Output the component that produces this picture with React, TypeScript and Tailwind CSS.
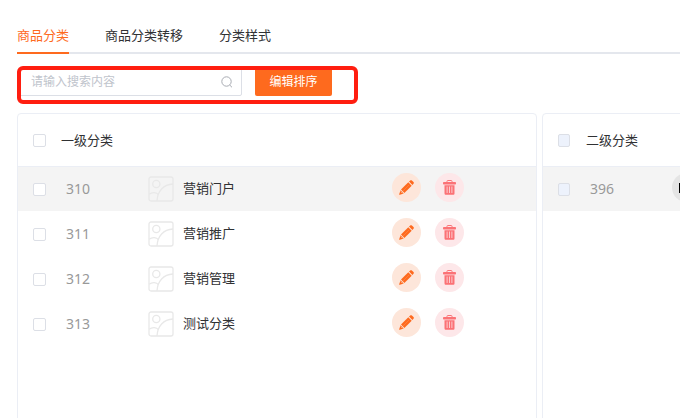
import { useState } from 'react'

type Category = {
  id: number
  name: string
}

const TABS = ['商品分类', '商品分类转移', '分类样式']

const PRIMARY: Category[] = [
  { id: 310, name: '营销门户' },
  { id: 311, name: '营销推广' },
  { id: 312, name: '营销管理' },
  { id: 313, name: '测试分类' },
]

const SECONDARY = [{ id: 396 }]

function ImagePlaceholder() {
  return (
    <svg className="size-[26px] shrink-0" viewBox="0 0 26 26" fill="none" stroke="#e8e8e8" strokeWidth="1.3" aria-hidden="true">
      <rect x="1" y="1" width="24" height="24" rx="2" />
      <circle cx="8.3" cy="8" r="3.6" />
      <path d="M25 8C15.5 8.500 9.500 15 9 25" />
      <path d="M1 18.200C4.500 15.700 8.500 16.200 10.500 18.700" />
    </svg>
  )
}

function PencilIcon() {
  return (
    <svg className="size-[15px]" viewBox="0 0 15 15" fill="#fe6a1e" aria-hidden="true">
      <path d="M2 9.600 9.300 2.300 12.700 5.700 5.400 13Z" />
      <path d="M1.500 10.300 4.700 13.500 .8 14.800C.3 14.900.1 14.700.2 14.200Z" />
      <path d="M10 1.600 11.200.5C11.700 0 12.400 0 12.900.5L14.500 2.100C15 2.600 15 3.300 14.500 3.800L13.400 5Z" />
      <path d="M4 11 10 5" stroke="#ff8b50" strokeWidth=".6" />
      <path d="M1.800 11.600 3.400 13.200" stroke="#fde6da" strokeWidth=".6" />
    </svg>
  )
}

function TrashIcon() {
  return (
    <svg className="h-[15px] w-[13px]" viewBox="0 0 13 15" fill="#fb7276" aria-hidden="true">
      <path d="M4 2V1.300C4 .8 4.300.5 4.800.5H8.200C8.700.5 9 .8 9 1.300V2" fill="none" stroke="#fb7276" />
      <rect y="2" width="13" height="2.500" rx="0.800" />
      <path d="M1.500 5.300H11.500V13.300C11.500 14.300 11 14.800 10 14.800H3C2 14.800 1.500 14.300 1.500 13.300Z" />
      <path d="M4.100 6.500V13M6.500 6.500V13M8.900 6.500V13" stroke="#fdd5d8" strokeWidth=".9" />
    </svg>
  )
}

function Tick({ label, muted }: { label: string; muted?: boolean }) {
  return (
    <input
      type="checkbox"
      aria-label={label}
      disabled={muted}
      className={`block h-[13px] appearance-none rounded-xs border border-[#dcdfe6] checked:border-[#fe6a1e] checked:bg-[#fe6a1e] ${
        muted ? 'w-3 bg-[#edf2fc]' : 'w-[13px] bg-white'
      }`}
    />
  )
}

export default function App() {
  const [tab, setTab] = useState(TABS[0])
  const [selected, setSelected] = useState(310)
  const [keyword, setKeyword] = useState('')

  return (
    <main className="h-screen overflow-hidden bg-white pl-[17px] pt-5 font-['Noto_Sans','Noto_Sans_CJK_SC',sans-serif] text-[13px] text-[#303133]">
      <nav className="flex gap-9 border-b-2 border-[#e4e7ed]">
        {TABS.map(t => (
          <button
            key={t}
            onClick={() => setTab(t)}
            className={`-mb-0.5 h-[34px] border-b-2 ${
              t === tab ? 'border-[#fe6a1e] text-[#fe6a1e]' : 'border-transparent'
            }`}
          >
            {t}
          </button>
        ))}
      </nav>

      {/* Search bar, outlined in red */}
      <div className="relative mt-3 flex h-[38px] w-[341px] items-center gap-[13px] pb-1.5">
        <label className="ml-px flex h-7 w-56 items-center rounded-xs border border-[#dcdfe6] pl-3 pr-2">
          <input
            value={keyword}
            onChange={e => setKeyword(e.target.value)}
            placeholder="请输入搜索内容"
            aria-label="搜索内容"
            className="min-w-0 flex-1 text-xs outline-none placeholder:text-[#c0c4cc]"
          />
          <svg className="size-3" viewBox="0 0 12 12" fill="none" stroke="#a8abb2" aria-hidden="true">
            <circle cx="5.500" cy="5.500" r="4.700" />
            <path d="M8.700 9 11 11.300" />
          </svg>
        </label>
        <button className="h-7 w-[77px] rounded-xs bg-[#fe6a1e] text-xs text-white">编辑排序</button>
        <div className="pointer-events-none absolute inset-0 rounded-md border-4 border-[#ff1e10]" />
      </div>

      <div className="mt-[9px] flex h-full gap-[5px]">
        <section className="w-[520px] shrink-0 rounded-t border border-[#ebeef5]">
          <table className="w-full table-fixed">
            <colgroup>
              <col className="w-[43px]" />
              <col className="w-[87px]" />
              <col className="w-[244px]" />
              <col />
            </colgroup>
            <thead>
              <tr className="h-[52px] border-b border-[#ebeef5]">
                <th className="pl-[15px] pt-0.5"><Tick label="全选一级分类" /></th>
                <th colSpan={3} className="pt-0.5 text-left font-normal">一级分类</th>
              </tr>
            </thead>
            <tbody>
              {PRIMARY.map(c => (
                <tr
                  key={c.id}
                  onClick={() => setSelected(c.id)}
                  className={`h-[45px] ${c.id === selected ? 'bg-[#f4f4f4]' : ''}`}
                >
                  <td className="pl-[15px] pt-0.5"><Tick label={c.name} /></td>
                  <td className="pl-[5px] text-sm text-[#999]">{c.id}</td>
                  <td>
                    <div className="flex items-center gap-[9px]">
                      <ImagePlaceholder />
                      {c.name}
                    </div>
                  </td>
                  <td className="pb-0.5">
                    <div className="flex gap-3.5">
                      <button aria-label="编辑" className="flex size-[29px] items-center justify-center rounded-full bg-[#fde6da]">
                        <PencilIcon />
                      </button>
                      <button aria-label="删除" className="flex size-[29px] items-center justify-center rounded-full bg-[#fde7e9]">
                        <TrashIcon />
                      </button>
                    </div>
                  </td>
                </tr>
              ))}
            </tbody>
          </table>
        </section>

        <section className="w-[520px] shrink-0 rounded-t border border-[#ebeef5]">
          <table className="w-full table-fixed">
            <colgroup>
              <col className="w-[43px]" />
              <col className="w-[86px]" />
              <col />
            </colgroup>
            <thead>
              <tr className="h-[52px] border-b border-[#ebeef5]">
                <th className="pl-[15px] pt-0.5"><Tick label="全选二级分类" muted /></th>
                <th colSpan={2} className="pt-0.5 text-left font-normal">二级分类</th>
              </tr>
            </thead>
            <tbody>
              {SECONDARY.map(c => (
                <tr key={c.id} className="h-[45px] bg-[#f4f4f4]">
                  <td className="pl-[15px] pt-0.5"><Tick label={String(c.id)} muted /></td>
                  <td className="pl-1 text-sm text-[#999]">{c.id}</td>
                  <td className="pb-0.5">
                    <div className="flex size-[29px] items-center justify-center rounded-full bg-[#e4e4e4]">
                      <div className="h-2.5 w-4 bg-black" />
                    </div>
                  </td>
                </tr>
              ))}
            </tbody>
          </table>
        </section>
      </div>
    </main>
  )
}
